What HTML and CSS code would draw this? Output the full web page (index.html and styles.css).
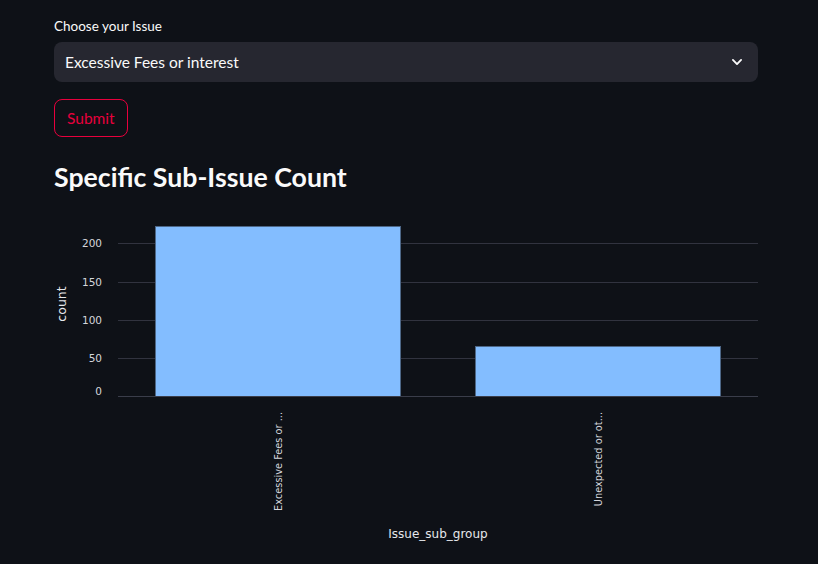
FILE: index.html
```html
<!DOCTYPE html>
<html>
<head>
<meta charset="utf-8">
<link rel="stylesheet" href="styles.css">
</head>
<body>
<main class="page">
  <label class="field-label">Choose your Issue</label>
  <div class="select">
    <span class="select-value">Excessive Fees or interest</span>
    <svg class="chevron" width="14" height="14" viewBox="0 0 24 24"><path d="M5 8.5l7 7 7-7" fill="none" stroke="#fafafa" stroke-width="3.2" stroke-linecap="round" stroke-linejoin="round"/></svg>
  </div>
  <button class="btn">Submit</button>
  <h3 class="title">Specific Sub-Issue Count</h3>
  <svg class="chart" width="704" height="344" viewBox="0 0 704 344">
    <g class="grid" stroke="#31333f" stroke-width="1">
      <line x1="64" x2="704" y1="33.5" y2="33.5"/>
      <line x1="64" x2="704" y1="72.5" y2="72.5"/>
      <line x1="64" x2="704" y1="110.5" y2="110.5"/>
      <line x1="64" x2="704" y1="148.5" y2="148.5"/>
    </g>
    <rect x="101.5" y="16.5" width="245" height="170" fill="#83bdff" stroke="#4d6787" stroke-width="1"/>
    <rect x="421.5" y="136.5" width="245" height="50" fill="#83bdff" stroke="#4d6787" stroke-width="1"/>
    <line x1="64" x2="704" y1="186.5" y2="186.5" stroke="#3a3d4a" stroke-width="1"/>
    <g class="ticks" fill="#d4d6dc" font-size="10.5" text-anchor="end">
      <text x="48" y="37">200</text>
      <text x="48" y="76">150</text>
      <text x="48" y="114">100</text>
      <text x="48" y="152">50</text>
      <text x="48" y="185">0</text>
    </g>
    <text class="axis-title" transform="translate(12 94) rotate(-90)" text-anchor="middle" fill="#e6e8ec" font-size="12.5">count</text>
    <g class="xlabels" fill="#d4d6dc" font-size="9.8" text-anchor="end">
      <text transform="translate(228 202) rotate(-90)">Excessive Fees or ...</text>
      <text transform="translate(548 202) rotate(-90)">Unexpected or ot...</text>
    </g>
    <text class="axis-title" x="384" y="328" text-anchor="middle" fill="#e6e8ec" font-size="12">Issue_sub_group</text>
  </svg>
</main>
</body>
</html>
```
FILE: styles.css
```css
* { box-sizing: border-box; }
html, body { margin: 0; padding: 0; background: #0e1117; }
body {
  font-family: "Source Sans Pro", "Lato", "Noto Sans", sans-serif;
  color: #fafafa;
}
.page {
  width: 704px;
  margin-left: 54px;
  padding-top: 17px;
  display: flex;
  flex-direction: column;
  align-items: flex-start;
}
.field-label {
  font-size: 13.5px;
  line-height: 18px;
  height: 18px;
  margin-bottom: 7px;
}
.select {
  width: 100%;
  height: 40px;
  background: #262730;
  border-radius: 8px;
  display: flex;
  align-items: center;
  justify-content: space-between;
  padding: 0 14px 0 11px;
}
.select-value { font-size: 15.5px; }
.chevron { display: block; }
.btn {
  margin-top: 17px;
  height: 38px;
  padding: 0 12px;
  background: transparent;
  border: 1px solid #e8003d;
  border-radius: 8px;
  color: #e8003d;
  font-family: inherit;
  font-size: 15.5px;
}
.title {
  margin: 22px 0 0 0;
  font-size: 26.7px;
  font-weight: 700;
  line-height: 36px;
}
.chart {
  display: block;
  margin-top: 15px;
  font-family: "DejaVu Sans", sans-serif;
}
.axis-title { font-family: "DejaVu Sans", sans-serif; }
```
